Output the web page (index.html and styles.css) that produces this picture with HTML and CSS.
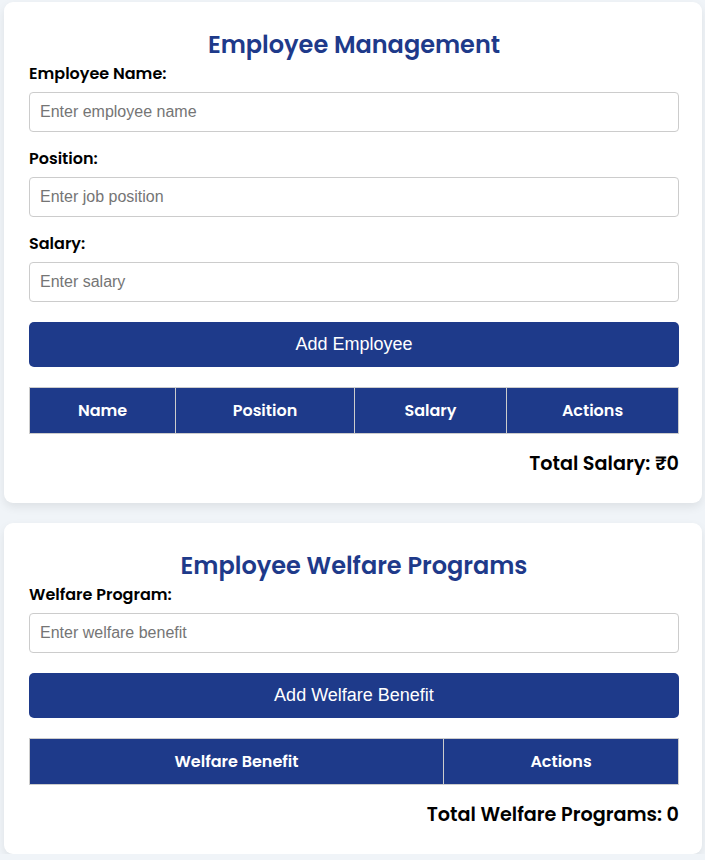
FILE: index.html
```html
<!DOCTYPE html>
<html>
<head>
<meta charset="utf-8">
<link rel="stylesheet" href="styles.css">
</head>
<body>
<div class="page">
  <section class="card">
    <h2 class="title">Employee Management</h2>
    <label class="label">Employee Name:</label>
    <input class="field" type="text" placeholder="Enter employee name">
    <label class="label">Position:</label>
    <input class="field" type="text" placeholder="Enter job position">
    <label class="label">Salary:</label>
    <input class="field" type="text" placeholder="Enter salary">
    <button class="btn">Add Employee</button>
    <table class="tbl">
      <thead>
        <tr><th class="c1">Name</th><th class="c2">Position</th><th class="c3">Salary</th><th>Actions</th></tr>
      </thead>
    </table>
    <div class="total">Total Salary: ₹0</div>
  </section>
  <section class="card">
    <h2 class="title">Employee Welfare Programs</h2>
    <label class="label">Welfare Program:</label>
    <input class="field" type="text" placeholder="Enter welfare benefit">
    <button class="btn">Add Welfare Benefit</button>
    <table class="tbl">
      <thead>
        <tr><th class="w1">Welfare Benefit</th><th>Actions</th></tr>
      </thead>
    </table>
    <div class="total">Total Welfare Programs: 0</div>
  </section>
</div>
</body>
</html>
```
FILE: styles.css
```css
* { box-sizing: border-box; }
body {
  margin: 0;
  background: #f0f4f8;
  font-family: "Poppins", "Inter", "Open Sans", sans-serif;
}
.page {
  padding: 2px 3px 0 4px;
  display: flex;
  flex-direction: column;
  gap: 20px;
}
.card {
  background: #fff;
  border-radius: 9px;
  box-shadow: 0 4px 10px rgba(0,0,0,0.08);
  padding: 27px 23px 27px 25px;
  display: flex;
  flex-direction: column;
}
.title {
  margin: 0 0 1px;
  text-align: center;
  color: #1e3a8a;
  font-size: 24px;
  font-weight: 600;
  line-height: 32px;
}
.label {
  font-size: 16px;
  font-weight: 600;
  color: #000;
  line-height: 24px;
  margin-bottom: 6px;
}
.field {
  height: 40px;
  border: 1px solid #ccc;
  border-radius: 4px;
  padding: 0 10px;
  font-family: "Liberation Sans", Arial, sans-serif;
  font-size: 16px;
  margin-bottom: 15px;
}
.field::placeholder { color: #757575; }
.btn {
  margin-top: 5px;
  height: 45px;
  border: none;
  border-radius: 5px;
  background: #1e3a8a;
  color: #fff;
  font-family: "Liberation Sans", Arial, sans-serif;
  font-size: 18px;
}
.tbl {
  margin-top: 20px;
  width: 100%;
  border-collapse: collapse;
}
.tbl th {
  background: #1e3a8a;
  color: #fff;
  border: 1px solid #ccc;
  height: 46px;
  font-size: 16px;
  font-weight: 600;
  text-align: center;
}
.c1 { width: 146px; }
.c2 { width: 179px; }
.c3 { width: 152px; }
.w1 { width: 414px; }
.total {
  margin-top: 18px;
  text-align: right;
  font-size: 19.2px;
  font-weight: 600;
  line-height: 24px;
}
```
